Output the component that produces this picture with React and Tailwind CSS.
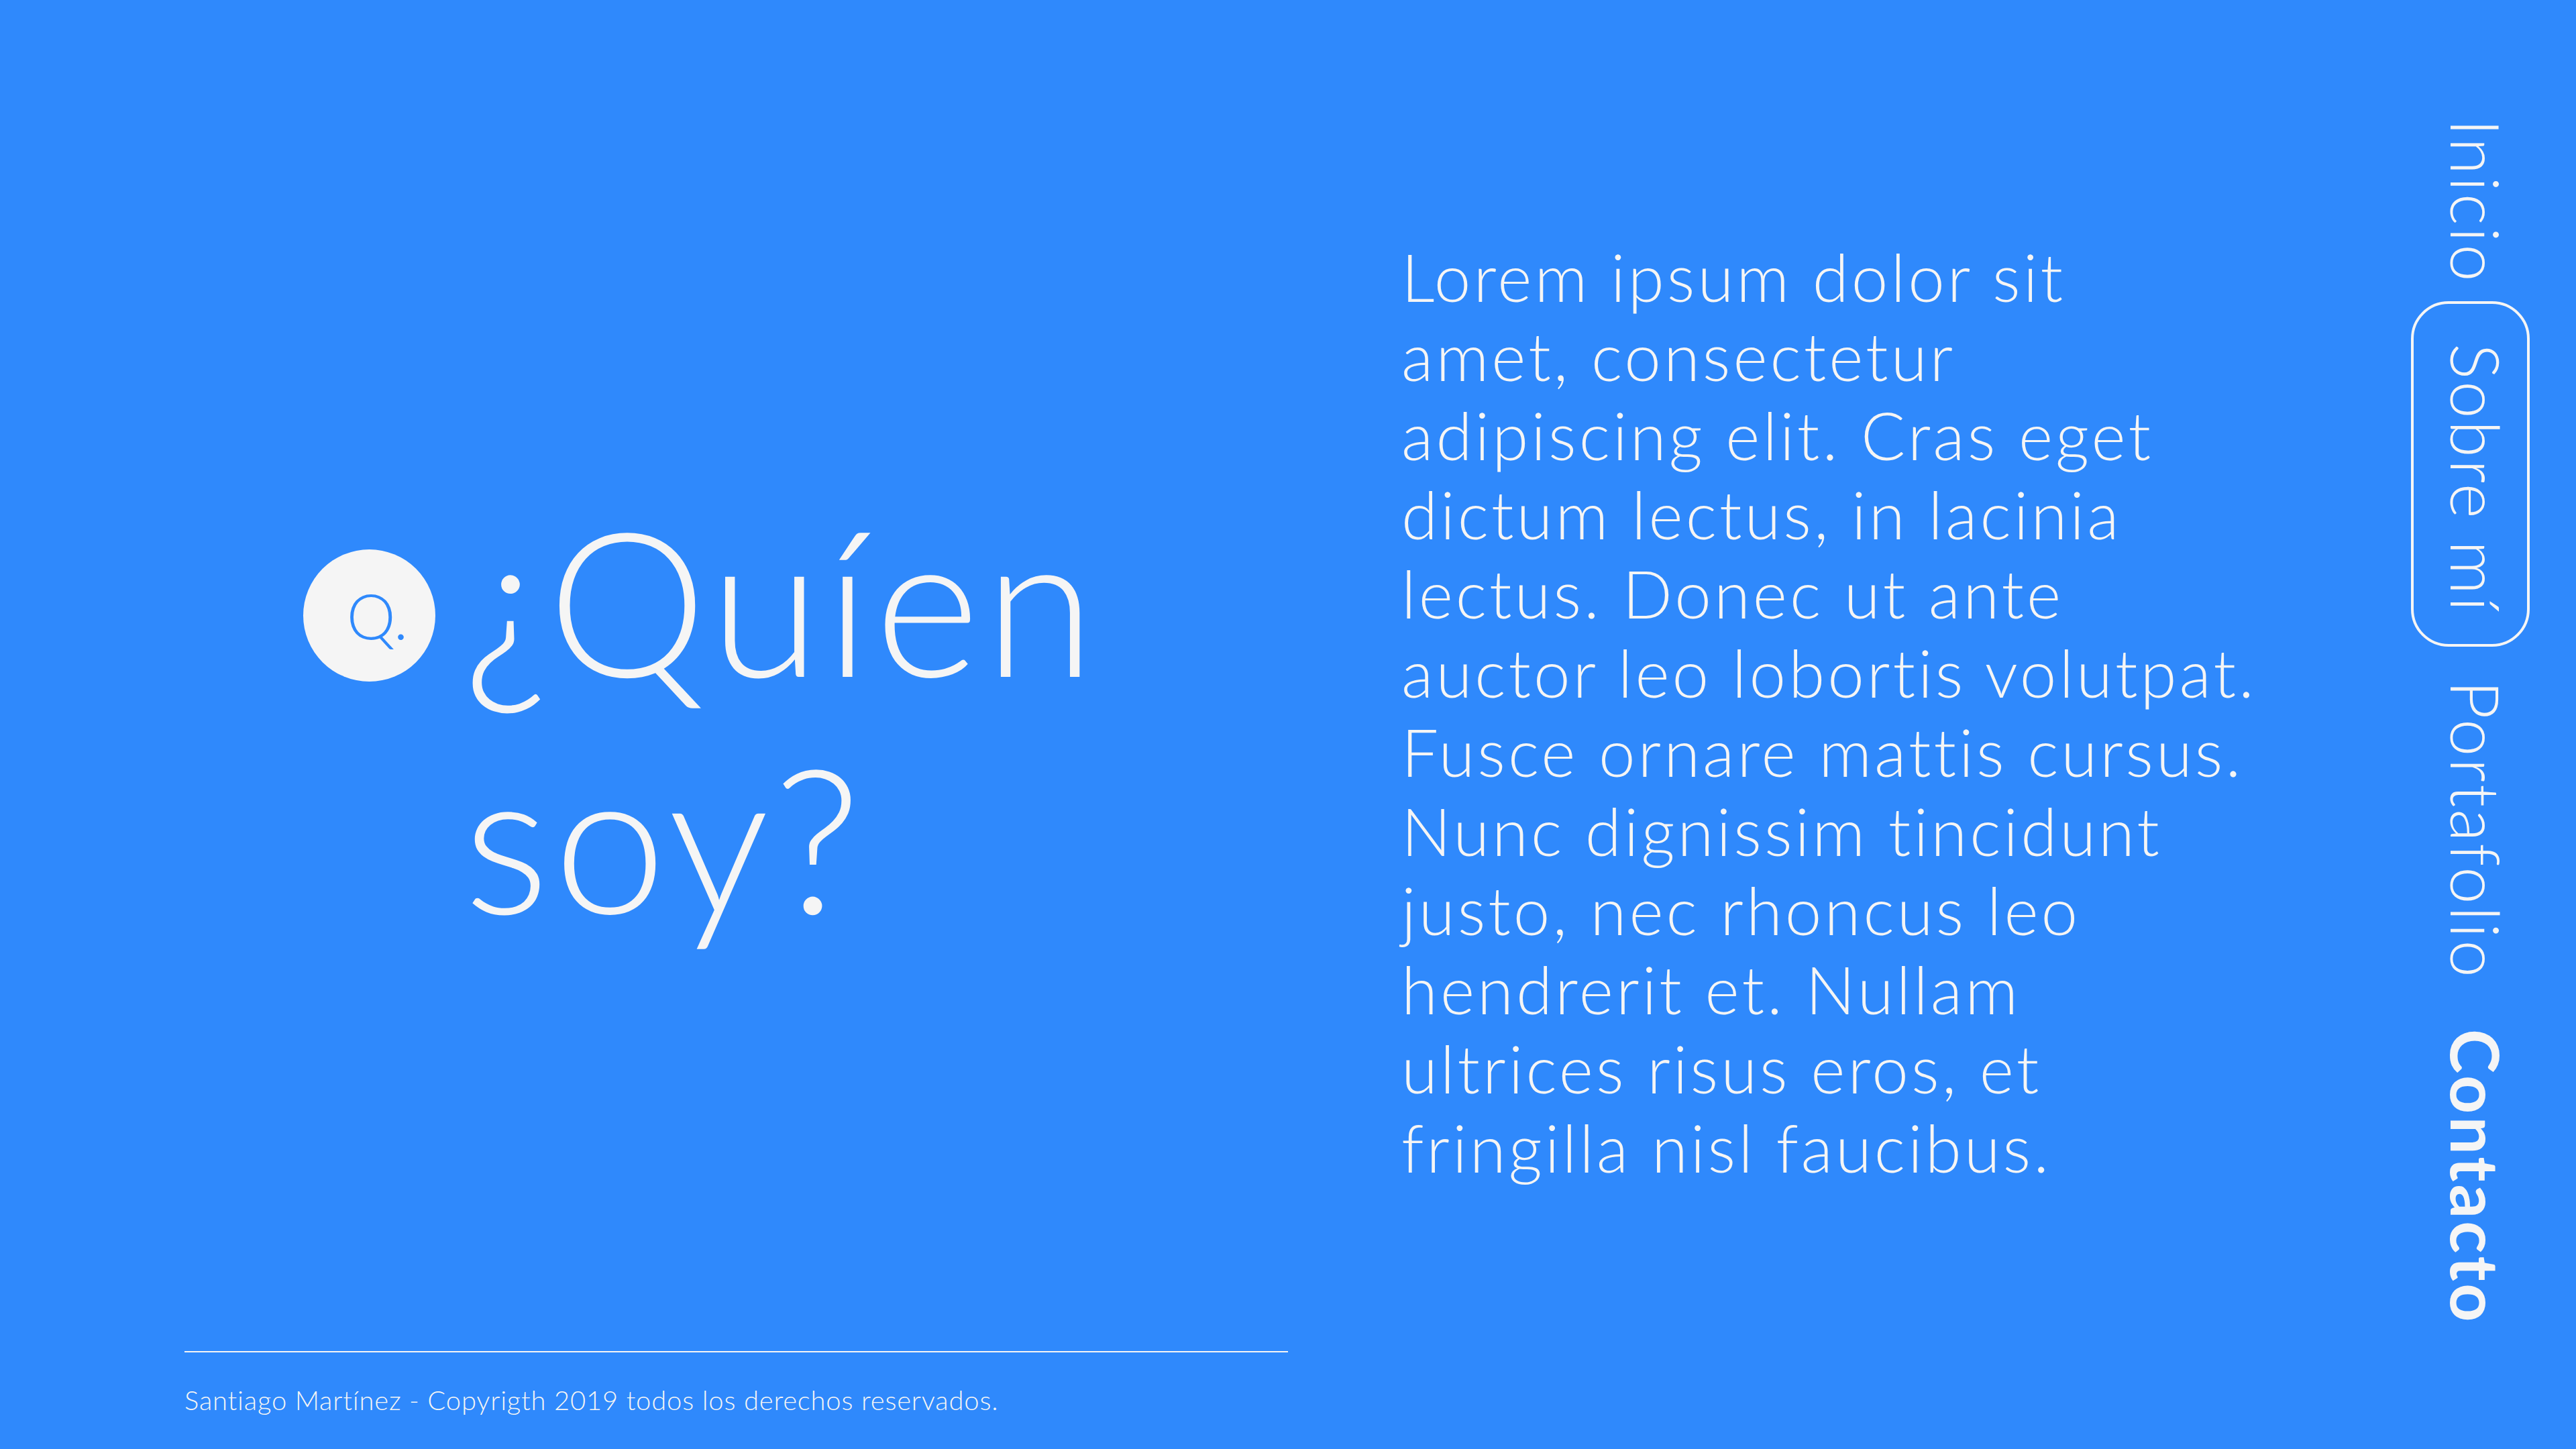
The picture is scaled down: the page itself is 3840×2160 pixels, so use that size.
const lines = [
  'Lorem ipsum dolor sit',
  'amet, consectetur',
  'adipiscing elit. Cras eget',
  'dictum lectus, in lacinia',
  'lectus. Donec ut ante',
  'auctor leo lobortis volutpat.',
  'Fusce ornare mattis cursus.',
  'Nunc dignissim tincidunt',
  'justo, nec rhoncus leo',
  'hendrerit et. Nullam',
  'ultrices risus eros, et',
  'fringilla nisl faucibus.',
]

const App = () => {
  return (
    <div className="w-[3840px] h-[2160px] bg-[#2f89fc] text-[#f5f5f5] font-['Lato',sans-serif] font-light [font-variant-ligatures:none] flex overflow-hidden">
      {/* Left: hero + footer */}
      <div className="w-[2089px] h-full flex flex-col pl-[275px]">
        <div className="flex items-start pt-[717px] pl-[177px]">
          <div className="mt-[102px] w-[197px] h-[197px] rounded-full bg-[#f5f5f5] flex items-center justify-center shrink-0">
            <span className="pl-[24px] text-[#2f89fc] text-[92px] leading-none">Q.</span>
          </div>
          <h1 className="ml-[42px] text-[300px] leading-[353px] font-light tracking-[7px]">
            ¿Quíen
            <br />
            soy?
          </h1>
        </div>

        {/* Footer */}
        <div className="mt-auto pb-[49px] w-[1645px]">
          <div className="h-[2px] bg-[#f5f5f5]"></div>
          <p className="mt-[47px] text-[40px] leading-[48px] tracking-[0.8px]">
            Santiago Martínez - Copyrigth 2019 todos los derechos reservados.
          </p>
        </div>
      </div>

      {/* Middle: paragraph */}
      <div className="w-[1400px] pt-[353px]">
        <p className="text-[98px] leading-[118px] tracking-[4px] whitespace-nowrap">
          {lines.map((line, i) => (
            <span key={i} className="block">
              {line}
            </span>
          ))}
        </p>
      </div>

      {/* Right: vertical nav */}
      <nav className="flex-1 flex flex-col items-end pr-[69px] pt-[177px]">
        <div className="w-[177px] flex flex-col items-center text-[100px] leading-[120px] tracking-[3px]">
          <a className="pl-[18px] [writing-mode:vertical-rl]">Inicio</a>
          <a className="mt-[26px] w-[177px] flex justify-center border-4 border-[#f5f5f5] rounded-[56px] pt-[59px] pb-[46px]">
            <span className="pl-[18px] [writing-mode:vertical-rl]">Sobre mí</span>
          </a>
          <a className="mt-[50px] pl-[18px] [writing-mode:vertical-rl]">Portafolio</a>
          <a className="mt-[74px] pl-[18px] [writing-mode:vertical-rl] font-bold tracking-[4px]">Contacto</a>
        </div>
      </nav>
    </div>
  )
}

export default App
